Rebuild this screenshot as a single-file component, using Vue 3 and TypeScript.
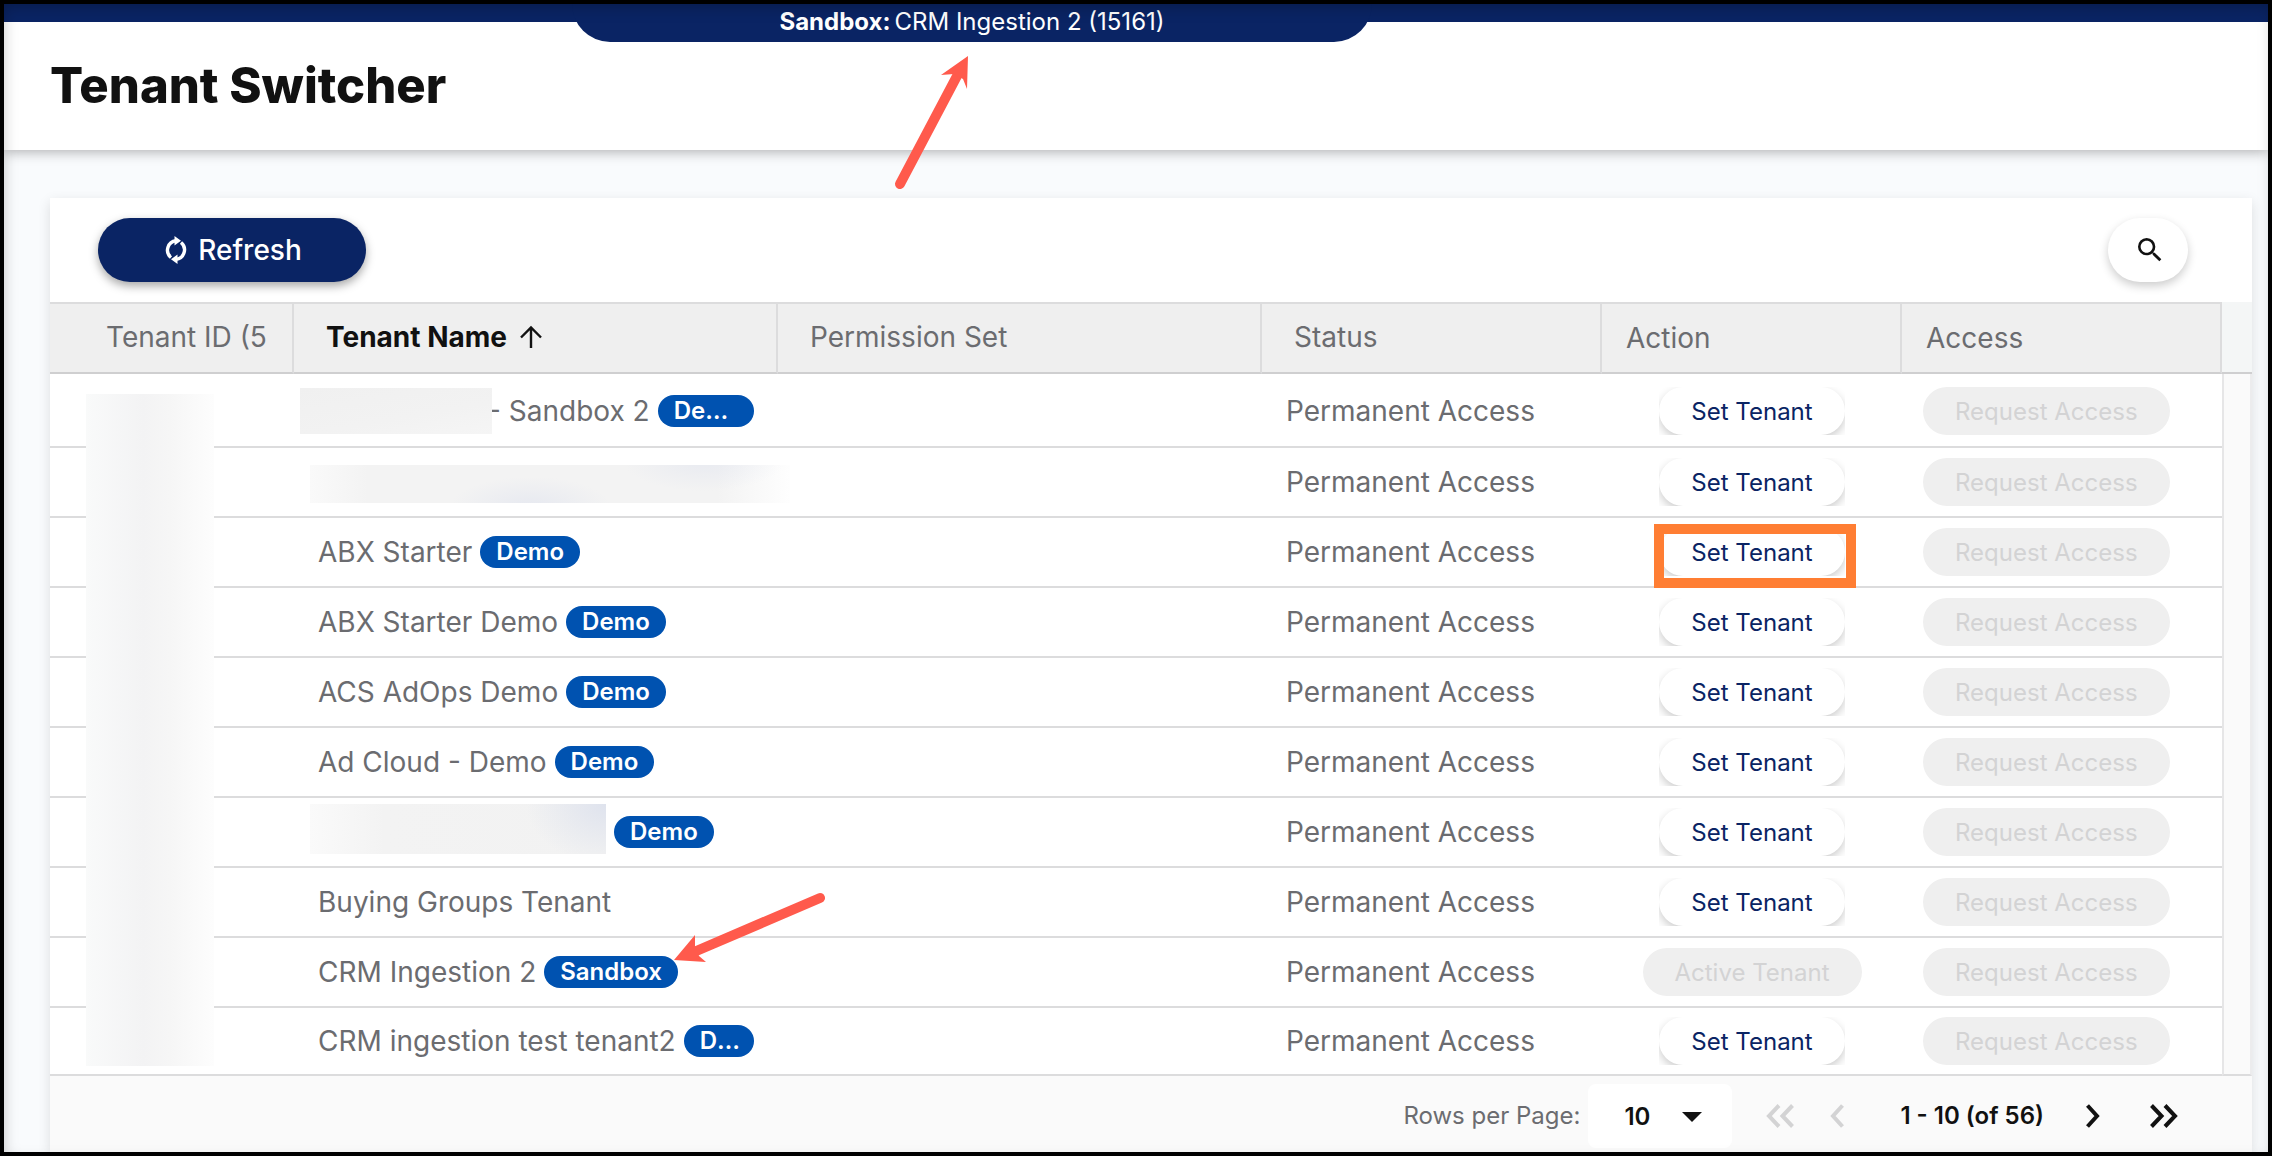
<script setup lang="ts">
import { ref } from 'vue'

interface Tenant {
  name: string
  tag?: string
  redacted?: 'prefix' | 'full' | 'whole-name'
  active?: boolean
  highlighted?: boolean
}

const tenants: Tenant[] = [
  { name: '- Sandbox 2', tag: 'Demo', redacted: 'prefix' },
  { name: '', redacted: 'full' },
  { name: 'ABX Starter', tag: 'Demo', highlighted: true },
  { name: 'ABX Starter Demo', tag: 'Demo' },
  { name: 'ACS AdOps Demo', tag: 'Demo' },
  { name: 'Ad Cloud - Demo', tag: 'Demo' },
  { name: '', tag: 'Demo', redacted: 'whole-name' },
  { name: 'Buying Groups Tenant' },
  { name: 'CRM Ingestion 2', tag: 'Sandbox', active: true },
  { name: 'CRM ingestion test tenant2', tag: 'Demo' },
]

const pageSize = ref('10')
</script>

<template>
  <div class="page">
    <div class="topbar">
      <div class="tenant-tab"><b>Sandbox:</b><span>CRM Ingestion 2 (15161)</span></div>
    </div>
    <header class="header">
      <h1>Tenant Switcher</h1>
    </header>

    <main class="content">
      <section class="card">
        <div class="toolbar">
          <button type="button" class="refresh">
            <svg width="24" height="28" viewBox="0 0 24 28" aria-hidden="true">
              <path d="M7 21.500A9.500 9.500 0 0 1 12 4.700M17 6.500A9.500 9.500 0 0 1 12 23.300" fill="none" stroke="#fff" stroke-width="3.400" />
              <path d="M10.500 0v9.400l6.500-4.700zM13.500 28v-9.400l-6.500 4.700z" fill="#fff" />
            </svg>
            <span>Refresh</span>
          </button>
          <button type="button" class="search" aria-label="Search">
            <svg width="32" height="32" viewBox="0 0 24 24" aria-hidden="true">
              <path fill="#111" d="M15.500 14h-.79l-.28-.27A6.471 6.471 0 0 0 16 9.500 6.500 6.500 0 1 0 9.500 16c1.610 0 3.090-.59 4.230-1.570l.27.28v.79l5 4.990L20.490 19l-4.990-5zm-6 0C7.010 14 5 11.990 5 9.500S7.010 5 9.500 5 14 7.010 14 9.500 11.990 14 9.500 14z" />
            </svg>
          </button>
        </div>

        <div class="grid">
          <div class="id-mask" aria-hidden="true"></div>
          <table>
            <colgroup>
              <col class="c-id" />
              <col />
              <col />
              <col class="c-status" />
              <col class="c-action" />
              <col class="c-access" />
              <col class="c-gutter" />
            </colgroup>
            <thead>
              <tr>
                <th scope="col" class="h-id">Tenant ID (5</th>
                <th scope="col" class="sorted">
                  <span>Tenant Name</span>
                  <svg width="24" height="24" viewBox="0 0 24 24" aria-hidden="true">
                    <path d="M12 23V3M2 12.500L12 2.500l10 10" fill="none" stroke="#111" stroke-width="2.4" />
                  </svg>
                </th>
                <th scope="col">Permission Set</th>
                <th scope="col">Status</th>
                <th scope="col" class="tight">Action</th>
                <th scope="col" class="tight">Access</th>
                <td class="gutter"></td>
              </tr>
            </thead>
            <tbody>
              <tr v-for="(t, i) in tenants" :key="i">
                <td></td>
                <td>
                  <div class="name" :class="t.redacted">
                    <span v-if="t.redacted" class="mask"></span>
                    <span v-if="t.name" class="label">{{ t.name }}</span>
                    <span v-if="t.tag" class="tag">{{ t.tag }}</span>
                  </div>
                </td>
                <td></td>
                <td class="status">Permanent Access</td>
                <td class="action">
                  <div class="action-box">
                    <div class="clip">
                      <button v-if="t.active" type="button" class="pill" disabled>Active Tenant</button>
                      <button v-else type="button" class="pill raised">Set Tenant</button>
                    </div>
                    <span v-if="t.highlighted" class="callout"></span>
                  </div>
                </td>
                <td class="access"><button type="button" class="pill" disabled>Request Access</button></td>
                <td class="gutter"></td>
              </tr>
            </tbody>
          </table>
        </div>

        <footer class="pager">
          <label for="rows">Rows per Page:</label>
          <div class="select">
            <select id="rows" v-model="pageSize">
              <option>10</option>
              <option>25</option>
              <option>50</option>
            </select>
            <svg width="20" height="10" viewBox="0 0 20 10" aria-hidden="true"><path d="M0 0h20L10 10z" fill="#111" /></svg>
          </div>
          <button type="button" class="nav first" disabled aria-label="First page">
            <svg width="28" height="24" viewBox="0 0 28 24"><path d="M13 1.500L3 12l10 10.500M26.500 1.500l-10 10.500 10 10.500" /></svg>
          </button>
          <button type="button" class="nav prev" disabled aria-label="Previous page">
            <svg width="14" height="24" viewBox="0 0 14 24"><path d="M12.500 1.500L3 12l9.500 10.500" /></svg>
          </button>
          <span class="range">1 - 10 (of 56)</span>
          <button type="button" class="nav next" aria-label="Next page">
            <svg width="14" height="24" viewBox="0 0 14 24"><path d="M1.500 1.500L11 12l-9.500 10.500" /></svg>
          </button>
          <button type="button" class="nav last" aria-label="Last page">
            <svg width="28" height="24" viewBox="0 0 28 24"><path d="M1.500 1.500L11.500 12l-10 10.500M15 1.500L25 12 15 22.500" /></svg>
          </button>
        </footer>
      </section>
    </main>

    <svg class="pointer to-tab" width="80" height="140" viewBox="890 52 80 140" aria-hidden="true">
      <path d="M900 184L957 76" />
      <polygon points="968,56 941,75 954,74 963,79 967,89" />
    </svg>
    <svg class="pointer to-tag" width="160" height="80" viewBox="670 890 160 80" aria-hidden="true">
      <path d="M820 898L694 952" />
      <polygon points="674,960 695,935 695,946 699,956 706,962" />
    </svg>
  </div>
</template>

<style>
body {
  margin: 0;
}
</style>

<style scoped>
.page {
  position: relative;
  display: flex;
  flex-direction: column;
  box-sizing: border-box;
  min-height: 100vh;
  border: 4px solid #000;
  background: #f9fbfd;
  overflow: hidden;
  font-family: Inter, "Liberation Sans", sans-serif;
  font-size: 28px;
  line-height: 32px;
  color: #6b6c70;
}
.page::after {
  content: "";
  position: absolute;
  z-index: 3;
  inset: 0;
  box-shadow: inset 2px 6px 16px -4px rgba(0, 0, 0, 0.28);
  pointer-events: none;
}
button,
select {
  font-family: inherit;
  border: 0;
  margin: 0;
}
.topbar {
  position: relative;
  z-index: 1;
  height: 18px;
  background: #0a2464;
}
.tenant-tab {
  box-sizing: border-box;
  width: 800px;
  height: 38px;
  margin-left: 568px;
  padding-bottom: 2px;
  border-radius: 0 0 40px 40px;
  background: #0a2464;
  display: flex;
  align-items: center;
  justify-content: center;
  gap: 4px;
  color: #fff;
  font-size: 24px;
}
.header {
  box-sizing: border-box;
  height: 128px;
  padding: 36px 46px;
  background: #fff;
  box-shadow: 0 2px 12px rgba(0, 0, 0, 0.3);
}
h1 {
  margin: 0;
  font-size: 49px;
  line-height: 56px;
  font-weight: 800;
  color: #111;
}
.content {
  flex: 1;
  display: flex;
  padding: 48px 16px 0 46px;
}
.card {
  flex: 1;
  min-width: 0;
  display: flex;
  flex-direction: column;
  background: #fff;
  box-shadow: 0 4px 12px rgba(0, 0, 0, 0.12);
}
.toolbar {
  display: flex;
  justify-content: space-between;
  padding: 20px 64px 20px 48px;
}
.refresh {
  display: flex;
  align-items: center;
  justify-content: center;
  gap: 10px;
  width: 268px;
  height: 64px;
  padding: 0 4px 0 6px;
  border-radius: 32px;
  background: #0a2464;
  color: #fff;
  font-size: 28px;
  font-weight: 500;
  box-shadow: 0 4px 10px rgba(0, 0, 0, 0.35);
}
.search {
  display: flex;
  align-items: center;
  justify-content: center;
  width: 80px;
  height: 64px;
  padding: 0 0 0 4px;
  border-radius: 32px;
  background: #fff;
  box-shadow: 0 4px 10px rgba(0, 0, 0, 0.2);
}
.grid {
  position: relative;
}
.id-mask {
  position: absolute;
  left: 36px;
  top: 92px;
  bottom: 10px;
  width: 128px;
  background: linear-gradient(90deg, #f9fafa, #f3f3f4 45%, #f6f6f6 65%, #fdfdfd);
}
table {
  width: 100%;
  table-layout: fixed;
  border-collapse: separate;
  border-spacing: 0;
}
.c-id { width: 244px; }
.c-status { width: 340px; }
.c-action { width: 300px; }
.c-access { width: 320px; }
.c-gutter { width: 30px; }
th,
td {
  box-sizing: border-box;
  padding: 0;
  text-align: left;
  white-space: nowrap;
}
th {
  height: 72px;
  padding: 0 24px 2px 32px;
  overflow: hidden;
  border-top: 2px solid #dcdcdd;
  border-bottom: 2px solid #cfcfd0;
  border-right: 2px solid #dcdcdd;
  background: #efefef;
  font-weight: 400;
}
.h-id {
  padding-left: 56px;
}
.tight {
  padding: 0 24px;
}
.sorted {
  font-weight: 700;
  color: #111;
}
.sorted svg {
  margin-left: 12px;
  vertical-align: -2px;
}
thead .gutter {
  background: #f4f6f6;
  border-bottom: 2px solid #cfcfd0;
}
tbody td {
  height: 70px;
  border-bottom: 2px solid #dcdcdd;
}
tbody tr:first-child td {
  height: 74px;
  padding-top: 2px;
}
tbody tr:last-child td {
  height: 68px;
}
tbody .gutter {
  background: #fafafa;
  border-bottom: 0;
  border-left: 2px solid #e6e6e7;
  border-right: 2px solid #ececed;
}
tbody tr:last-child .gutter {
  border-bottom: 2px solid #dcdcdd;
}
.name {
  display: flex;
  align-items: center;
  gap: 8px;
  padding: 0 24px;
}
.label {
  flex: none;
}
.tag {
  min-width: 0;
  padding: 0 16px;
  border-radius: 16px;
  background: #0052b0;
  color: #fff;
  font-size: 24px;
  font-weight: 600;
  overflow: hidden;
  text-overflow: ellipsis;
}
.mask {
  position: relative;
  flex: none;
}
.prefix {
  padding-left: 6px;
}
.prefix .mask {
  width: 192px;
  height: 46px;
  margin: -8px -12px -8px 0;
  background: linear-gradient(170deg, #f0f0f0, #f2f2f2 60%, #f5f5f5);
}
.full {
  padding: 4px 0 0 16px;
}
.full .mask {
  width: 480px;
  height: 38px;
  background:
    radial-gradient(ellipse 80px 30px at 46% 110%, rgba(222, 226, 238, 0.6), transparent),
    radial-gradient(ellipse 80px 30px at 82% -10%, rgba(222, 226, 238, 0.5), transparent),
    linear-gradient(90deg, #fafafa, #f3f3f3 12%, #f3f3f3 85%, #fefefe);
}
.whole-name {
  padding-left: 16px;
}
.whole-name .mask {
  width: 296px;
  height: 50px;
  margin: -10px 0 -4px;
  background:
    radial-gradient(ellipse 80px 60px at 100% 0, rgba(218, 223, 236, 0.8), transparent),
    linear-gradient(90deg, #fafafa, #f3f3f3 25%, #f2f2f2);
}
.status {
  padding-left: 24px;
}
.action-box {
  position: relative;
  display: flex;
  justify-content: center;
}
.clip {
  display: flex;
  overflow: hidden;
}
.pill {
  height: 48px;
  padding: 0 32px;
  border-radius: 24px;
  background: #efefef;
  color: #d3d3d4;
  font-size: 24px;
  font-weight: 400;
}
.raised {
  background: #fff;
  color: #0a2464;
  box-shadow: 0 4px 10px rgba(0, 0, 0, 0.2);
}
.callout {
  position: absolute;
  left: 52px;
  right: 46px;
  top: -4px;
  height: 44px;
  border: 10px solid #ff7e33;
  pointer-events: none;
}
.access {
  padding-left: 21px;
}
.access .pill {
  display: block;
}
.pager {
  flex: 1;
  display: flex;
  align-items: center;
  box-sizing: border-box;
  min-height: 76px;
  padding: 4px 74px 0 24px;
  background: #fafafa;
  justify-content: flex-end;
  font-size: 24px;
}
.pager label {
  margin-right: 8px;
}
.select {
  position: relative;
  width: 144px;
  height: 64px;
}
.select select {
  appearance: none;
  width: 100%;
  height: 100%;
  padding: 0 36px;
  border-radius: 8px;
  background: #fff;
  color: #111;
  font-size: 24px;
  font-weight: 600;
}
.select svg {
  position: absolute;
  right: 30px;
  top: 28px;
  pointer-events: none;
}
.nav {
  display: flex;
  padding: 0;
  background: none;
}
.nav path {
  fill: none;
  stroke: #111;
  stroke-width: 4;
}
.nav:disabled path {
  stroke: #d3d3d4;
}
.first {
  margin-left: 34px;
}
.prev {
  margin-left: 36px;
}
.range {
  margin-left: 56px;
  font-weight: 600;
  color: #111;
}
.next {
  margin-left: 42px;
}
.last {
  margin-left: 50px;
}
.pointer {
  position: absolute;
  z-index: 2;
  pointer-events: none;
}
.pointer path {
  stroke: #ff5a4c;
  stroke-width: 10;
  stroke-linecap: round;
}
.pointer polygon {
  fill: #ff5a4c;
}
.to-tab {
  left: 886px;
  top: 48px;
}
.to-tag {
  left: 666px;
  top: 886px;
}
</style>
